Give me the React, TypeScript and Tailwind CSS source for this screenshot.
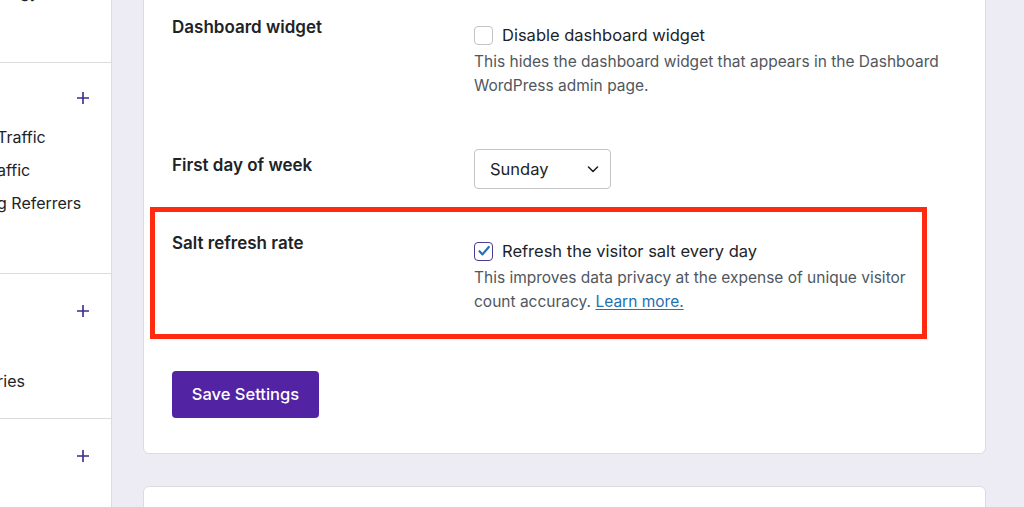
import React from 'react';

const font = { fontFamily: 'Inter, "Noto Sans", "Liberation Sans", sans-serif' };

const PlusIcon: React.FC = () => (
  <svg width="14" height="14" viewBox="0 0 14 14" className="text-[#3b2a8e]">
    <path d="M7 1v12M1 7h12" stroke="currentColor" strokeWidth="1.6" />
  </svg>
);

const SidebarSection: React.FC<{ items: string[]; height: string; listTop: string }> = ({ items, height, listTop }) => (
  <div className={`border-b border-[#dcdcde] ${height}`}>
    <div className="flex justify-end pr-[21px] pt-[28px]">
      <PlusIcon />
    </div>
    <ul className={`${listTop} space-y-[9px] text-[16px] leading-6 text-[#1d2327] -ml-[3px]`}>
      {items.map((item, i) => (
        <li key={i}>{item}</li>
      ))}
    </ul>
  </div>
);

const Checkbox: React.FC<{ checked?: boolean }> = ({ checked }) => (
  <span
    className={`flex h-[19px] w-[19px] shrink-0 items-center justify-center rounded-[4px] border bg-white ${
      checked ? 'border-[#4b3c8f] border-[1.5px]' : 'border-[#c3c4c7]'
    }`}
  >
    {checked && (
      <svg width="14" height="14" viewBox="0 0 14 14">
        <path d="M2.5 7.2l3 3.2L11.8 3" fill="none" stroke="#2271b1" strokeWidth="2.2" strokeLinecap="round" strokeLinejoin="round" />
      </svg>
    )}
  </span>
);

const App: React.FC = () => {
  return (
    <div className="flex h-[507px] w-[1024px] overflow-hidden bg-[#edebf4]" style={font}>
      {/* left menu */}
      <aside className="w-[112px] shrink-0 overflow-hidden border-r border-[#dcdcde] bg-white">
        <div className="h-[63px] overflow-hidden border-b border-[#dcdcde]">
          <div className="-translate-y-[20px] pl-[20px] text-[16px] leading-6 text-[#1d2327]">gy</div>
        </div>
        <SidebarSection items={['Traffic', 'affic', 'g Referrers']} height="h-[211px]" listTop="mt-[20px]" />
        <div className="h-[145px] border-b border-[#dcdcde]">
          <div className="flex justify-end pr-[21px] pt-[30px]">
            <PlusIcon />
          </div>
          <div className="mt-[51px] -ml-[3px] text-[16px] leading-6 text-[#1d2327]">ries</div>
        </div>
        <div className="flex justify-end pr-[21px] pt-[30px]">
          <PlusIcon />
        </div>
      </aside>

      {/* main */}
      <main className="ml-[31px] w-[843px] shrink-0">
        <section className="-mt-[8px] rounded-md border border-[#dcdcde] bg-white px-[28px] pt-[22px] pb-[35px]">
          {/* Dashboard widget */}
          <div className="flex items-start">
            <div className="w-[302px] shrink-0 text-[17px] font-semibold leading-6 text-[#1d2327]">Dashboard widget</div>
            <div className="mt-[8px]">
              <label className="flex items-center gap-[9px] text-[16.5px] leading-6 text-[#1d2327]">
                <Checkbox />
                Disable dashboard widget
              </label>
              <p className="mt-[3px] w-[470px] text-[15.5px] leading-6 text-[#50575e]">
                This hides the dashboard widget that appears in the Dashboard WordPress admin page.
              </p>
            </div>
          </div>

          {/* First day of week */}
          <div className="mt-[51px] flex items-start">
            <div className="mt-[4px] w-[302px] shrink-0 text-[17px] font-semibold leading-6 text-[#1d2327]">First day of week</div>
            <button className="flex h-[40px] w-[137px] items-center justify-between rounded-[4px] border border-[#c3c4c7] bg-white pl-[15px] pr-[10px] text-[16.5px] text-[#1d2327]">
              Sunday
              <svg width="14" height="14" viewBox="0 0 14 14">
                <path d="M2.5 5l4.5 4.5L11.5 5" fill="none" stroke="#1d2327" strokeWidth="1.6" strokeLinecap="round" strokeLinejoin="round" />
              </svg>
            </button>
          </div>

          {/* Salt refresh rate, highlighted */}
          <div className="-ml-[22px] mt-[18px] flex w-[777px] items-start border-[5px] border-[#ff2a10] pl-[17px] pt-[19px] pb-[20px]">
            <div className="w-[302px] shrink-0 text-[17px] font-semibold leading-6 text-[#1d2327]">Salt refresh rate</div>
            <div className="mt-[8px]">
              <label className="flex items-center gap-[9px] text-[16.5px] leading-6 text-[#1d2327]">
                <Checkbox checked />
                Refresh the visitor salt every day
              </label>
              <p className="mt-[3px] w-[440px] text-[15.5px] leading-6 text-[#50575e]">
                This improves data privacy at the expense of unique visitor count accuracy.{' '}
                <a href="#" className="text-[#2271b1] underline underline-offset-2">
                  Learn more.
                </a>
              </p>
            </div>
          </div>

          <button className="mt-[32px] h-[47px] w-[147px] rounded-[4px] bg-[#5224a3] text-[16.5px] font-medium text-white">
            Save Settings
          </button>
        </section>

        <section className="mt-[32px] h-[60px] rounded-md border border-[#dcdcde] bg-white" />
      </main>
    </div>
  );
};

export default App;
